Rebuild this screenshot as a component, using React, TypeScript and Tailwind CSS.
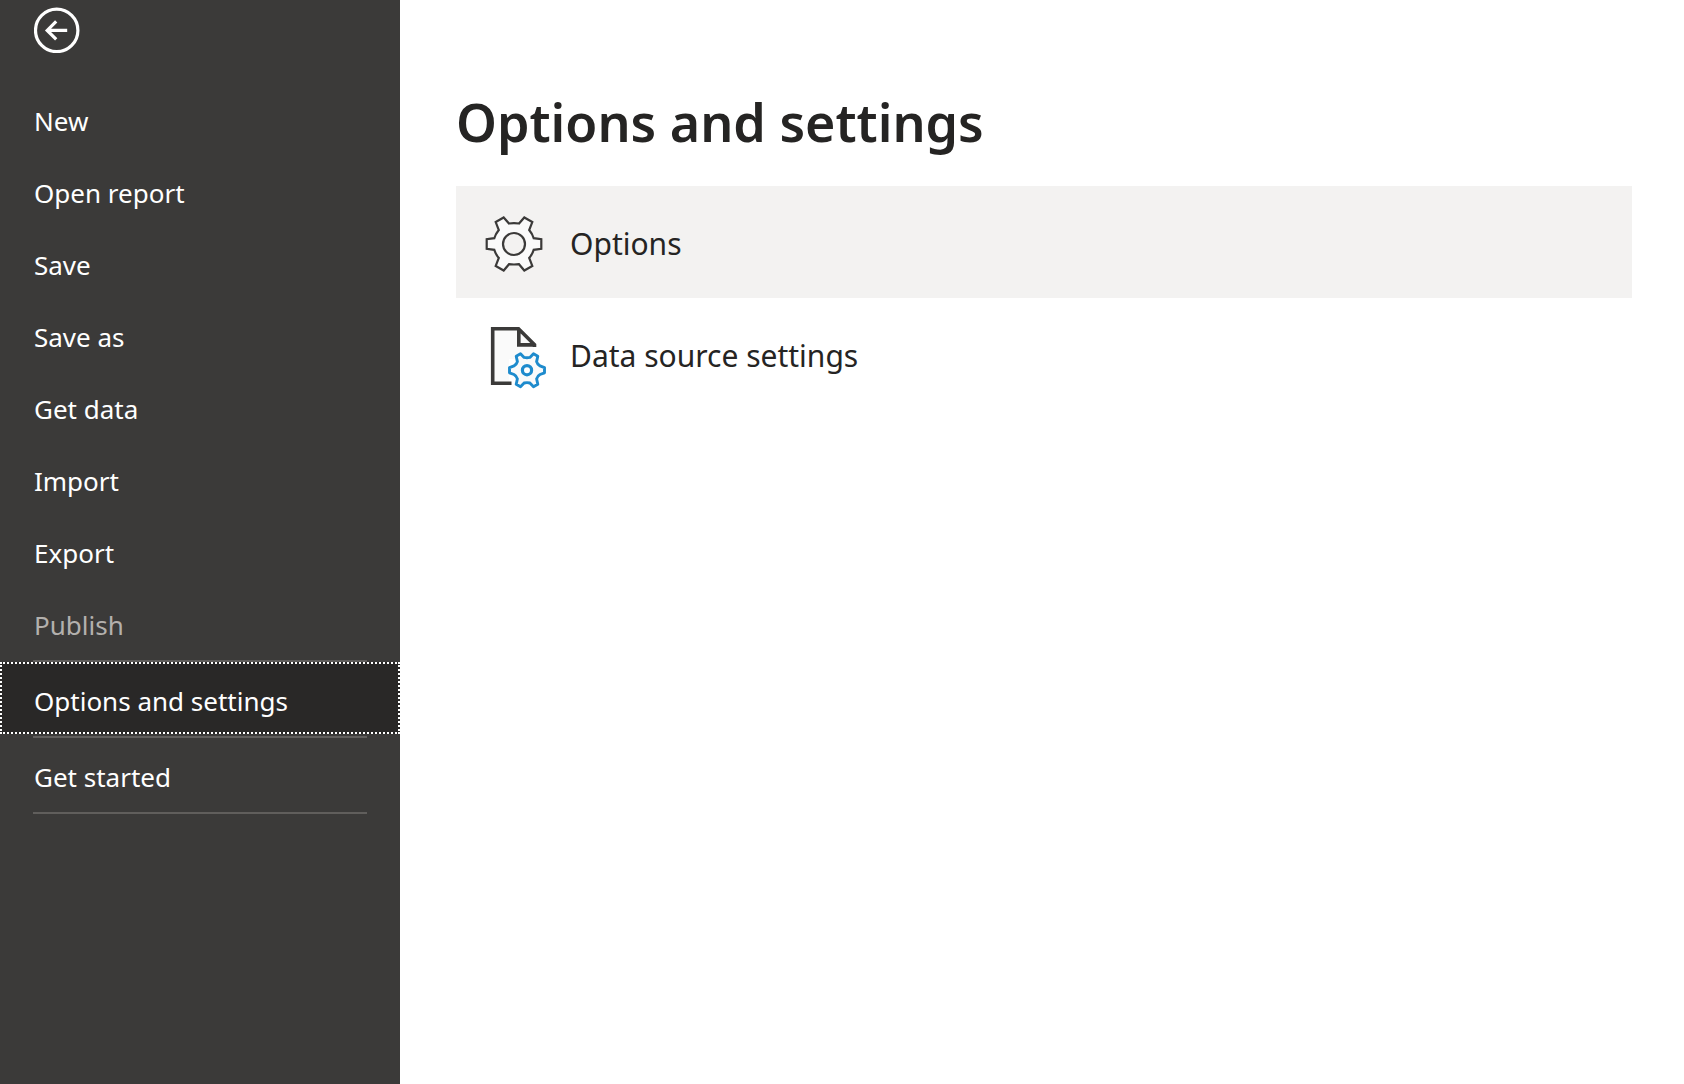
import React from "react";

const fileActions = ["New", "Open report", "Save", "Save as", "Get data", "Import", "Export", "Publish"];

function BackIcon() {
  return (
    <svg width="46" height="46" viewBox="0 0 46 46" fill="none" stroke="#fff" strokeWidth="3.2" aria-hidden="true">
      <circle cx="22.7" cy="23.4" r="21.2" />
      <path d="M33.2 23.4H13.2M22.2 14.4L13.2 23.4L22.2 32.4" />
    </svg>
  );
}

function GearIcon() {
  return (
    <svg width="60" height="60" viewBox="0 0 60 60" aria-hidden="true">
      <path
        d="M19.7 3.5L25 9.5Q30 8.9 35 9.5L40.3 3.5L48.3 8.1L45.2 16Q48.5 20 49.7 24.2L57.3 25.2V34.8L49.7 35.8Q48.5 40 45.2 44L48.3 51.9L40.3 56.5L35 50.2Q30 50.8 25 50.2L19.7 56.5L11.7 51.9L14.8 44Q11.5 40 10.3 35.8L2.7 34.8V25.2L10.3 24.2Q11.5 20 14.8 16L11.7 8.1Z"
        fill="#fafafa"
        stroke="#3b3a39"
        strokeWidth="2.2"
      />
      <circle cx="30" cy="30" r="11" fill="#f3f2f1" stroke="#3b3a39" strokeWidth="2.2" />
    </svg>
  );
}

function DataSourceIcon() {
  return (
    <svg className="overflow-visible" width="60" height="64" viewBox="0 0 60 64" aria-hidden="true">
      <path d="M9 5H34L50 21V35H25V59H9Z" fill="#fafafa" />
      <path d="M27.5 59.3H8.7V4.7H34.5L50.5 20.7V23M34.8 5V20.9H50" fill="none" stroke="#3b3a39" strokeWidth="3.6" />
      <path
        d="M36.5 29.7L40.1 33.4Q43 34.1 45.9 33.4L49.5 29.7L53.8 32.2L52.6 37.6Q53.4 40.5 56 41.9L60.5 43.6V48.8L56 50.5Q53.4 51.9 52.6 54.8L53.8 60.2L49.5 62.7L45.9 59Q43 58.3 40.1 59L36.5 62.7L32.2 60.2L33.4 54.8Q32.6 51.9 30 50.5L25.5 48.8V43.6L30 41.9Q32.6 40.5 33.4 37.6L32.2 32.2Z"
        fill="#fafafa"
        stroke="#1e8bcd"
        strokeWidth="2.9"
        strokeLinejoin="round"
      />
      <circle cx="43" cy="46.2" r="4.6" fill="#fff" stroke="#1e8bcd" strokeWidth="3.2" />
    </svg>
  );
}

function NavItem({ label, state }: { label: string; state?: "selected" | "disabled" }) {
  const look =
    state === "selected"
      ? "bg-[#292827] text-white outline-2 -outline-offset-2 outline-dotted outline-white"
      : state === "disabled"
        ? "text-[#b3b0ad]"
        : "text-white";
  return (
    <button
      type="button"
      disabled={state === "disabled"}
      aria-current={state === "selected" ? "page" : undefined}
      className={"flex h-18 w-full items-center px-[34px] pt-1.5 text-left text-[26px] leading-9 " + look}
    >
      {label}
    </button>
  );
}

function Separator() {
  return (
    <div className="flex h-1 items-end px-[33px]">
      <div className="h-0.5 w-full bg-[#605e5c]" />
    </div>
  );
}

function OptionRow({ label, icon, active }: { label: string; icon: React.ReactNode; active?: boolean }) {
  return (
    <button
      type="button"
      className={"flex h-28 w-full items-center gap-[26px] pt-1 pl-7 text-left text-[30px] leading-10 text-[#252423] " + (active ? "bg-[#f3f2f1]" : "bg-white")}
    >
      <span className="flex w-15 items-center justify-center">{icon}</span>
      <span>{label}</span>
    </button>
  );
}

export default function App() {
  return (
    <div className="flex min-h-screen bg-white font-['Noto_Sans',sans-serif]">
      <nav className="w-[400px] shrink-0 bg-[#3b3a39]">
        <div className="flex h-[82px] items-start px-[34px] pt-[7px]">
          <button type="button" aria-label="Back">
            <BackIcon />
          </button>
        </div>
        {fileActions.map((label) => (
          <NavItem key={label} label={label} state={label === "Publish" ? "disabled" : undefined} />
        ))}
        <Separator />
        <NavItem label="Options and settings" state="selected" />
        <Separator />
        <NavItem label="Get started" />
        <Separator />
      </nav>
      <main className="min-w-0 flex-1 pt-[82px] pr-[52px] pl-14">
        <h1 className="mb-6 text-[52px] leading-20 font-semibold text-[#252423]">Options and settings</h1>
        <OptionRow label="Options" icon={<GearIcon />} active />
        <OptionRow label="Data source settings" icon={<DataSourceIcon />} />
      </main>
    </div>
  );
}
